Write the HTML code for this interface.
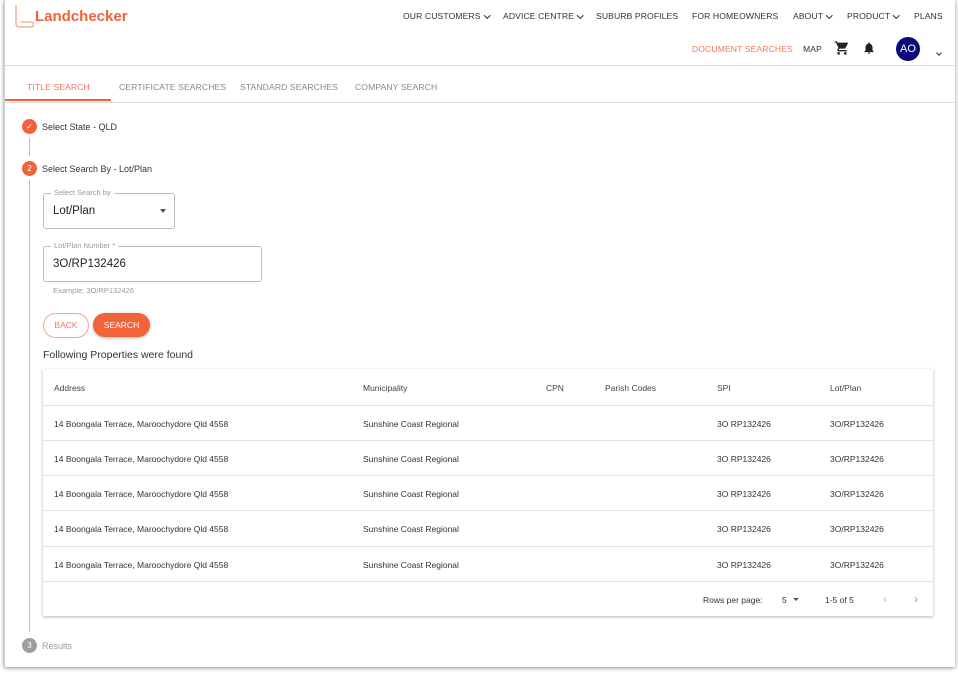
<!DOCTYPE html>
<html><head><style>
body{margin:0;width:959px;height:676px;background:#fff;font-family:"Liberation Sans",sans-serif;position:relative;overflow:hidden;color:#333}
.card{position:absolute;left:4px;top:0;width:950px;height:667px;background:#fff;box-shadow:0 1px 4px rgba(0,0,0,.45);border-left:1px solid #ccc}
.a{position:absolute;white-space:nowrap}
.nav{font-size:8.6px;color:#333;top:11px;letter-spacing:.1px}
.hr{position:absolute;left:0;right:0;height:1px;background:#ddd}
.tab{font-size:8.6px;color:#888;top:82px;letter-spacing:.1px}
.circ{position:absolute;width:15px;height:15px;border-radius:50%;background:#f4623a;color:#fff;font-size:8px;text-align:center;line-height:15px}
.fs{position:absolute;border:1px solid #bbb;border-radius:3px}
.lg{position:absolute;top:-6px;left:7px;background:#fff;padding:0 3px;font-size:7.5px;color:#999}
.tbl{position:absolute;left:38px;top:369px;width:890px;height:247px;box-shadow:0 1px 3px rgba(0,0,0,.3);background:#fff}
.row{position:absolute;left:0;width:890px;height:35px;border-top:1px solid #e4e4e4;font-size:8.5px;color:#333}
.row span{position:absolute;top:13px}
.chev{display:inline-block;width:3.5px;height:3.5px;border-right:1.5px solid #333;border-bottom:1.5px solid #333;transform:rotate(45deg);margin:0 0 2px 4px}
</style></head><body>
<div class="card">
<svg class="a" style="left:9px;top:4px" width="20" height="24"><path d="M2 1v19a3 3 0 0 0 3 3h12a2 2 0 0 0 0-5H7" fill="none" stroke="#f4a58f" stroke-width="1.3"/></svg>
<div class="a" style="left:30px;top:8px;font-size:15px;font-weight:bold;color:#f4623a">Landchecker</div>
<div class="a nav" style="left:398px">OUR CUSTOMERS<span class="chev"></span></div>
<div class="a nav" style="left:498px">ADVICE CENTRE<span class="chev"></span></div>
<div class="a nav" style="left:591px">SUBURB PROFILES</div>
<div class="a nav" style="left:687px">FOR HOMEOWNERS</div>
<div class="a nav" style="left:788px">ABOUT<span class="chev"></span></div>
<div class="a nav" style="left:842px">PRODUCT<span class="chev"></span></div>
<div class="a nav" style="left:909px">PLANS</div>
<div class="a nav" style="left:687px;top:44px;color:#f07860">DOCUMENT SEARCHES</div>
<div class="a nav" style="left:798px;top:44px">MAP</div>
<svg class="a" style="left:829px;top:40px" width="16" height="16" viewBox="0 0 24 24"><path fill="#222" d="M7 18c-1.1 0-2 .9-2 2s.9 2 2 2 2-.9 2-2-.9-2-2-2zM1 2v2h2l3.6 7.6-1.4 2.4c-.1.3-.2.6-.2 1 0 1.1.9 2 2 2h12v-2H7.4c-.1 0-.2-.1-.2-.2v-.1l.9-1.7h7.4c.8 0 1.4-.4 1.7-1l3.6-6.5c.1-.2.1-.3.1-.5 0-.6-.4-1-1-1H5.2l-.9-2H1zm16 16c-1.1 0-2 .9-2 2s.9 2 2 2 2-.9 2-2-.9-2-2-2z"/></svg>
<svg class="a" style="left:857px;top:41px" width="14" height="14" viewBox="0 0 24 24"><path fill="#222" d="M12 22c1.1 0 2-.9 2-2h-4a2 2 0 0 0 2 2zm6-6v-5c0-3.1-1.6-5.6-4.5-6.3V4a1.5 1.5 0 0 0-3 0v.7C7.6 5.4 6 7.9 6 11v5l-2 2v1h16v-1l-2-2z"/></svg>
<div class="a" style="left:891px;top:37px;width:24px;height:24px;border-radius:50%;background:#0a0a78;color:#fff;font-size:11px;line-height:24px;text-align:center">AO</div>
<div class="a" style="left:932px;top:42px"><span class="chev" style="width:3px;height:3px;margin:0"></span></div>
<div class="hr" style="top:65px"></div>
<div class="a tab" style="left:22px;color:#f07860">TITLE SEARCH</div>
<div class="a tab" style="left:114px">CERTIFICATE SEARCHES</div>
<div class="a tab" style="left:235px">STANDARD SEARCHES</div>
<div class="a tab" style="left:350px">COMPANY SEARCH</div>
<div class="a" style="left:0;top:99px;width:106px;height:2px;background:#f4623a"></div>
<div class="hr" style="top:102px"></div>

<div class="circ" style="left:17px;top:119px">✓</div>
<div class="a" style="left:37px;top:122px;font-size:9px">Select State - QLD</div>
<div class="a" style="left:24px;top:138px;width:1px;height:18px;background:#bbb"></div>
<div class="circ" style="left:17px;top:161px">2</div>
<div class="a" style="left:37px;top:164px;font-size:9px">Select Search By - Lot/Plan</div>
<div class="a" style="left:24px;top:180px;width:1px;height:452px;background:#bbb"></div>

<div class="fs" style="left:38px;top:193px;width:130px;height:34px"><span class="lg">Select Search by</span><span class="a" style="left:9px;top:11px;font-size:11.5px;color:#222">Lot/Plan</span><span class="a" style="right:8px;top:15px;border:3.5px solid transparent;border-top:4px solid #555"></span></div>
<div class="fs" style="left:38px;top:246px;width:217px;height:34px"><span class="lg">Lot/Plan Number *</span><span class="a" style="left:9px;top:11px;font-size:11.5px;color:#222">3O/RP132426</span></div>
<div class="a" style="left:48px;top:286px;font-size:7.5px;color:#999">Example: 3O/RP132426</div>
<div class="a" style="left:38px;top:313px;width:44px;height:23px;border:1px solid #f4a58f;border-radius:13px;color:#f07860;font-size:8.5px;text-align:center;line-height:23px">BACK</div>
<div class="a" style="left:88px;top:313px;width:57px;height:24px;background:#f4623a;border-radius:13px;color:#fff;font-size:8.5px;text-align:center;line-height:24px;box-shadow:0 1px 3px rgba(0,0,0,.3)">SEARCH</div>
<div class="a" style="left:38px;top:349px;font-size:10.5px;color:#333">Following Properties were found</div>

<div class="tbl">
<div class="row" style="top:0;border-top:none;height:36px;color:#444"><span style="left:11px;top:14px">Address</span><span style="left:320px;top:14px">Municipality</span><span style="left:503px;top:14px">CPN</span><span style="left:562px;top:14px">Parish Codes</span><span style="left:674px;top:14px">SPI</span><span style="left:787px;top:14px">Lot/Plan</span></div>
<div class="row" style="top:36px"><span style="left:11px">14 Boongala Terrace, Maroochydore Qld 4558</span><span style="left:320px">Sunshine Coast Regional</span><span style="left:674px">3O RP132426</span><span style="left:787px">3O/RP132426</span></div>
<div class="row" style="top:71px"><span style="left:11px">14 Boongala Terrace, Maroochydore Qld 4558</span><span style="left:320px">Sunshine Coast Regional</span><span style="left:674px">3O RP132426</span><span style="left:787px">3O/RP132426</span></div>
<div class="row" style="top:106px"><span style="left:11px">14 Boongala Terrace, Maroochydore Qld 4558</span><span style="left:320px">Sunshine Coast Regional</span><span style="left:674px">3O RP132426</span><span style="left:787px">3O/RP132426</span></div>
<div class="row" style="top:141px"><span style="left:11px">14 Boongala Terrace, Maroochydore Qld 4558</span><span style="left:320px">Sunshine Coast Regional</span><span style="left:674px">3O RP132426</span><span style="left:787px">3O/RP132426</span></div>
<div class="row" style="top:177px"><span style="left:11px">14 Boongala Terrace, Maroochydore Qld 4558</span><span style="left:320px">Sunshine Coast Regional</span><span style="left:674px">3O RP132426</span><span style="left:787px">3O/RP132426</span></div>
<div class="row" style="top:212px"><span style="left:660px">Rows per page:</span><span style="left:739px">5</span><span style="left:750px;top:16px;border:3px solid transparent;border-top:3.5px solid #555"></span><span style="left:782px">1-5 of 5</span><span style="left:840px;top:10px;font-size:12px;color:#bbb">‹</span><span style="left:871px;top:10px;font-size:12px;color:#999">›</span></div>
</div>

<div class="circ" style="left:17px;top:638px;background:#9e9e9e">3</div>
<div class="a" style="left:37px;top:641px;font-size:9px;color:#999">Results</div>
</div>
</body></html>
